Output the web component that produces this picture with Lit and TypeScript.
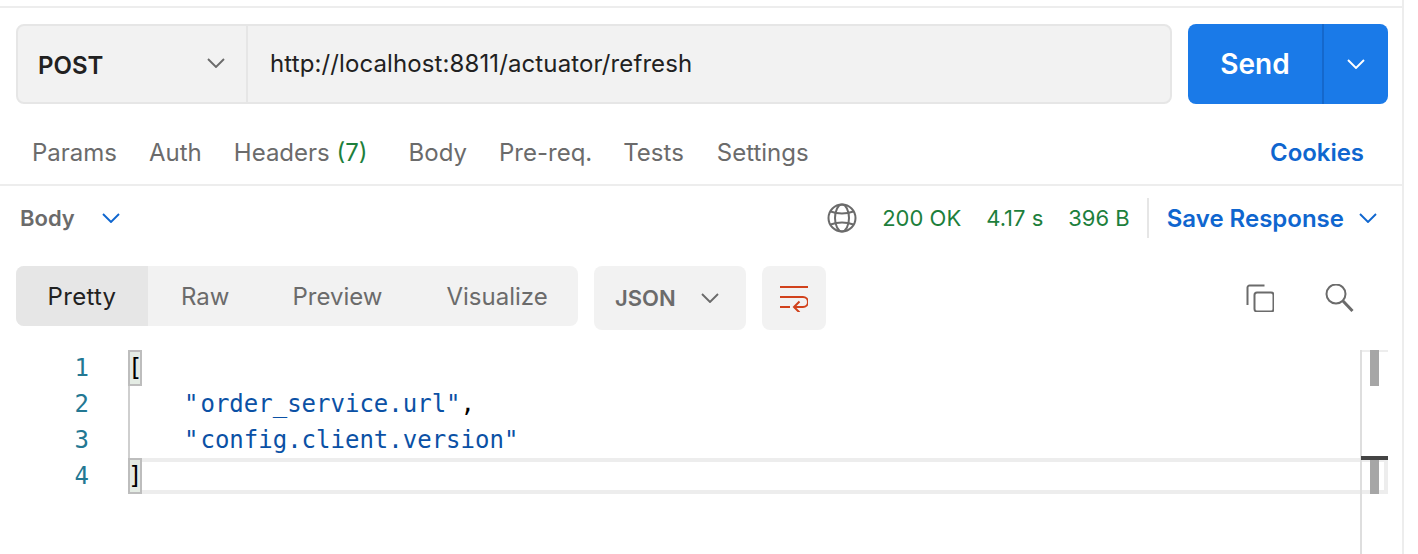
import { LitElement, html, css } from "lit";
import { customElement } from "lit/decorators.js";

const chevron = () => html`<svg class="chev" width="18" height="10" viewBox="0 0 18 10" fill="none"><path d="M1 1 L9 9 L17 1" stroke="currentColor" stroke-width="1.9"/></svg>`;

@customElement("app-root")
export class AppRoot extends LitElement {
  static styles = css`
    :host { display: block; width: 1418px; height: 554px; background: #fff; font-family: Inter, "Liberation Sans", sans-serif; font-size: 24px; color: #6b6b6b; overflow: hidden; }
    .panel { width: 1404px; height: 554px; box-sizing: border-box; border-right: 2px solid #ededed; padding-top: 6px; position: relative; }
    .topline { height: 2px; background: #ededed; }
    .request { display: flex; gap: 16px; margin: 16px 14px 0 16px; height: 80px; }
    .urlbox { flex: 1; display: flex; background: #f2f2f2; border: 2px solid #e6e6e6; border-radius: 8px; box-sizing: border-box; }
    .method { width: 230px; box-sizing: border-box; border-right: 2px solid #e6e6e6; display: flex; align-items: center; justify-content: space-between; padding: 2px 21px 0 20px; font-weight: 600; color: #212121; }
    .method .chev { color: #6b6b6b; margin-top: -4px; }
    .url { padding-left: 22px; display: flex; align-items: center; color: #212121; margin-top: -2px; letter-spacing: 0.11px; }
    .send { width: 200px; background: #1a7ae8; border-radius: 8px; display: flex; color: #fff; font-weight: 600; font-size: 28px; }
    .send-main { width: 136px; display: flex; align-items: center; justify-content: center; border-right: 2px solid #1568cc; box-sizing: border-box; }
    .send-arrow { flex: 1; display: flex; align-items: center; justify-content: center; }
    .tabs { display: flex; align-items: center; height: 64px; margin-top: 16px; padding: 0 38px 0 32px; border-bottom: 2px solid #ededed; }
    .tab { margin-right: 32px; }
    .tab.hdr { margin-right: 41px; }
    .tab.pre { margin-right: 31px; }
    .tab.tests { margin-right: 33px; }
    .green { color: #1d7f3c; }
    .cookies { margin-left: auto; color: #0f66cf; font-weight: 600; letter-spacing: -0.05px; }
    .status { display: flex; align-items: center; height: 64px; padding: 0 25px 0 20px; }
    .body-label { font-weight: 600; font-size: 22px; margin-right: 27px; }
    .body-chev { color: #0f66cf; display: inline-flex; }
    .spacer { flex: 1; }
    .meta { display: flex; align-items: center; color: #1d7f3c; font-size: 22px; }
    .meta svg { margin-right: 25px; }
    .meta span { margin-right: 25px; }
    .meta span:last-child { margin-right: 17px; }
    .vdiv { width: 2px; height: 40px; background: #e6e6e6; }
    .save { margin-left: 18px; color: #0f66cf; font-weight: 600; display: flex; align-items: center; gap: 15px; }
    .toolbar { display: flex; align-items: flex-start; height: 64px; margin: 16px 14px 0 16px; gap: 16px; }
    .seg { display: flex; width: 562px; height: 60px; background: #f2f2f2; border-radius: 8px; overflow: hidden; align-items: center; }
    .seg div { display: flex; align-items: center; height: 100%; }
    .seg .on { width: 132px; background: #e6e6e6; color: #212121; justify-content: center; letter-spacing: 0.3px; }
    .seg .raw { margin-left: 33px; }
    .seg .prev { margin-left: 63px; }
    .seg .vis { margin-left: 64px; }
    .json { width: 152px; height: 64px; background: #f2f2f2; border-radius: 8px; display: flex; align-items: center; justify-content: space-between; padding: 0 27px 0 21px; box-sizing: border-box; font-weight: 600; font-size: 22px; }
    .wrap { width: 64px; height: 64px; background: #f2f2f2; border-radius: 8px; display: flex; align-items: center; justify-content: center; }
    .tools { margin-left: auto; display: flex; gap: 51px; padding: 18px 33px 0 0; }
    .code { margin-top: 20px; font-family: "DejaVu Sans Mono", monospace; font-size: 24px; color: #0b51a5; }
    .row { display: flex; height: 36px; line-height: 36px; margin-right: 14px; }
    .ln { width: 128px; box-sizing: border-box; padding-right: 39px; text-align: right; color: #237893; flex: none; }
    .ct { flex: 1; position: relative; white-space: pre; color: #000; }
    .ct.guide { border-left: 2px solid #cfcfcf; }
    .ct.active::after { content: ""; position: absolute; inset: 0; border: 4px solid #ededed; border-left: none; pointer-events: none; }
    .br { display: inline-block; width: 14px; height: 36px; box-sizing: border-box; border: 2px solid #bdbdbd; background: #e4ece4; line-height: 32px; position: relative; z-index: 1; vertical-align: top; text-indent: -2px; }
    .str { margin-left: 54px; color: #0b51a5; }
    .q { margin-right: 2px; }
    .ruler { position: absolute; left: 1360px; top: 350px; width: 28px; height: 204px; border-left: 2px solid #dedede; box-sizing: border-box; }
    .ruler .rtop { position: absolute; left: 0; right: 0; top: 0; height: 2px; background: #ededed; }
    .thumb { position: absolute; left: 8px; width: 9px; background: #a6a6a6; }
    .thumb-a { top: 0; height: 36px; }
    .thumb-b { top: 108px; height: 36px; }
    .cursor { position: absolute; left: -1px; right: 0; top: 106px; height: 4px; background: #444; }
  `;

  render() {
    return html`<div class="panel">
      <div class="topline"></div>
      <div class="request">
        <div class="urlbox">
          <div class="method"><span>POST</span>${chevron()}</div>
          <div class="url">http://localhost:8811/actuator/refresh</div>
        </div>
        <div class="send"><div class="send-main">Send</div><div class="send-arrow">${chevron()}</div></div>
      </div>
      <div class="tabs">
        <span class="tab">Params</span><span class="tab">Auth</span>
        <span class="tab hdr">Headers <span class="green">(7)</span></span>
        <span class="tab">Body</span><span class="tab pre">Pre-req.</span><span class="tab tests">Tests</span><span class="tab">Settings</span>
        <span class="cookies">Cookies</span>
      </div>
      <div class="status">
        <span class="body-label">Body</span><span class="body-chev">${chevron()}</span>
        <span class="spacer"></span>
        <div class="meta">
          <svg width="30" height="30" viewBox="0 0 30 30" fill="none" stroke="#6b6b6b" stroke-width="2">
            <circle cx="15" cy="15" r="13.5"/><ellipse cx="15" cy="15" rx="7" ry="13.5"/>
            <path d="M3.5 8.5 Q15 12.5 26.5 8.5 M3.5 21.5 Q15 17.5 26.5 21.5"/>
          </svg>
          <span>200 OK</span><span>4.17 s</span><span>396 B</span>
        </div>
        <div class="vdiv"></div>
        <div class="save">Save Response <span class="body-chev">${chevron()}</span></div>
      </div>
      <div class="toolbar">
        <div class="seg"><div class="on">Pretty</div><div class="raw">Raw</div><div class="prev">Preview</div><div class="vis">Visualize</div></div>
        <div class="json"><span>JSON</span>${chevron()}</div>
        <div class="wrap">
          <svg width="28" height="28" viewBox="0 0 28 28" fill="none" stroke="#d1421c" stroke-width="2">
            <path d="M0 3H28 M0 13H23a5 5 0 0 1 0 10H15 M19.5 17.5L14 23L19.5 28.5 M0 23H10"/>
          </svg>
        </div>
        <div class="tools">
          <svg width="28" height="28" viewBox="0 0 28 28" fill="none" stroke="#6b6b6b" stroke-width="2">
            <path d="M18.5 1.5H3.5a2 2 0 0 0-2 2V21"/><rect x="8.5" y="8.5" width="19" height="19" rx="2.5"/>
          </svg>
          <svg width="30" height="30" viewBox="0 0 30 30" fill="none" stroke="#6b6b6b" stroke-width="2">
            <circle cx="11" cy="10" r="9.5"/><path d="M18 17L27.5 27" stroke-width="3"/>
          </svg>
        </div>
      </div>
      <div class="code">
        <div class="row"><div class="ln">1</div><div class="ct"><span class="br">[</span></div></div>
        <div class="row"><div class="ln">2</div><div class="ct guide"><span class="str"><span class="q">"</span>order_service.url"</span>,</div></div>
        <div class="row"><div class="ln">3</div><div class="ct guide"><span class="str"><span class="q">"</span>config.client.version"</span></div></div>
        <div class="row"><div class="ln">4</div><div class="ct active"><span class="br">]</span></div></div>
      </div>
      <div class="ruler">
        <div class="rtop"></div>
        <div class="thumb thumb-a"></div>
        <div class="thumb thumb-b"></div>
        <div class="cursor"></div>
      </div>
    </div>`;
  }
}
